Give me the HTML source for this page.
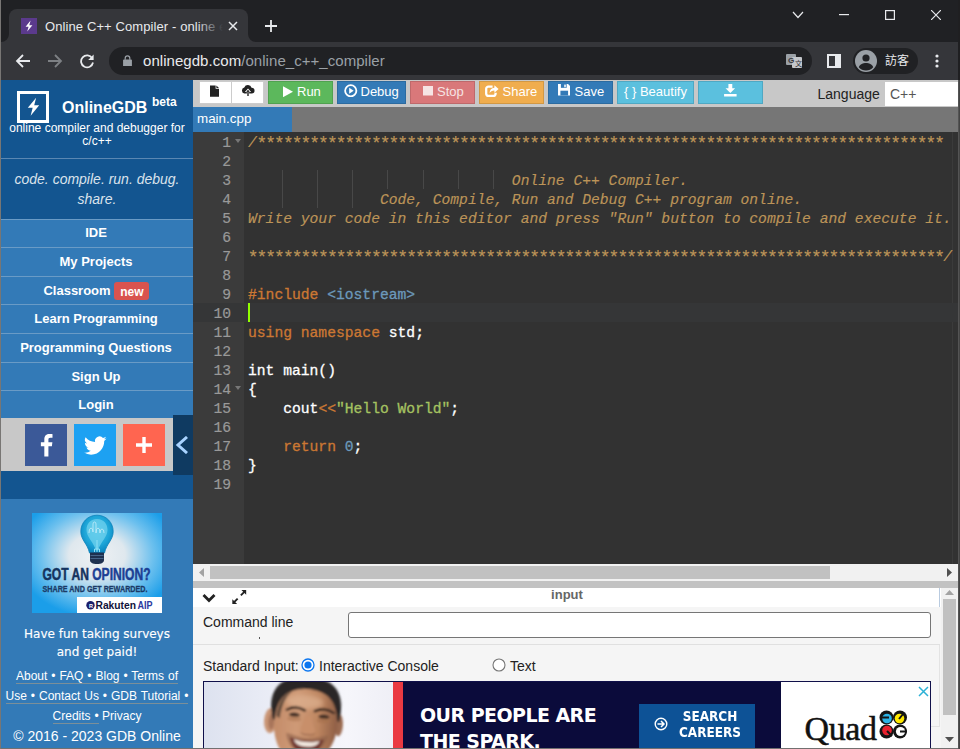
<!DOCTYPE html>
<html lang="en">
<head>
<meta charset="utf-8">
<title>Online C++ Compiler - online editor</title>
<style>
*{box-sizing:border-box;margin:0;padding:0}
html,body{width:960px;height:749px;overflow:hidden;background:#202124}
body{position:relative;font-family:"Liberation Sans",Arial,sans-serif;font-size:14px;color:#fff}
.abs{position:absolute}
/* ---------- browser chrome ---------- */
#tabstrip{position:absolute;left:0;top:0;width:960px;height:42px;background:#202124}
#tab{position:absolute;left:9px;top:9px;width:239px;height:33px;background:#35363a;border-radius:8px 8px 0 0}
#tabtitle{position:absolute;left:45px;top:17px;width:178px;height:20px;font-size:13px;line-height:20px;color:#e8eaed;white-space:nowrap;overflow:hidden;letter-spacing:0.1px}
#tabfade{position:absolute;left:196px;top:17px;width:27px;height:20px;background:linear-gradient(90deg,rgba(53,54,58,0),#35363a)}
#toolbar{position:absolute;left:0;top:42px;width:960px;height:38px;background:#35363a}
#omni{position:absolute;left:109px;top:47px;width:703px;height:28px;border-radius:14px;background:#202124}
#url{position:absolute;left:143px;top:51px;font-size:15px;line-height:20px;color:#e8eaed;white-space:nowrap;letter-spacing:0.05px}
#url span{color:#9aa0a6}
#chip{position:absolute;left:853px;top:48px;width:65px;height:26px;border-radius:13px;background:#202124}
#guest{position:absolute;left:885px;top:51px;font-size:12px;line-height:20px;color:#e8eaed;font-family:"Liberation Sans","Noto Sans CJK TC",sans-serif;white-space:nowrap}
/* ---------- sidebar ---------- */
#side{position:absolute;left:1px;top:80px;width:192px;height:669px;background:#135590;overflow:hidden}
#side .c{position:absolute;left:0;width:192px;text-align:center;white-space:nowrap}
.mi{position:absolute;left:0;width:192px;height:29px;background:#337ab7;border-top:1px solid #6a9bc6;text-align:center;font-weight:bold;font-size:13px;line-height:27px;color:#fff;padding-right:2px}
#foot a{color:#fff;text-decoration:none;border-bottom:1px solid #7b8f99;word-spacing:.600px;padding-bottom:0}
/* ---------- top toolbar ---------- */
#ptool{position:absolute;left:193px;top:80px;width:765px;height:27px;background:#c8c8c8}
.btn{position:absolute;top:81px;height:23px;font-size:13.400px;line-height:21px;color:#fff;text-align:center;white-space:nowrap;border:1px solid rgba(0,0,0,.12)}
.bt{position:absolute;top:84px;font-size:13px;line-height:16px;color:#fff;white-space:nowrap}
#ftabs{position:absolute;left:193px;top:107px;width:765px;height:25px;background:#767676}
#ftab{position:absolute;left:193px;top:107px;width:99px;height:25px;background:#337ab7;font-size:13.400px;line-height:24px;padding-left:4px;color:#fff}
/* ---------- editor ---------- */
#ed{position:absolute;left:193px;top:132px;width:765px;height:432px;background:#323232;overflow:hidden}
#gut{position:absolute;left:0;top:0;width:51px;height:432px;background:#3b3b3b}
.ln,.cl{margin-top:2px;position:absolute;font-family:"Liberation Mono","DejaVu Sans Mono",monospace;font-size:14.67px;line-height:19px;height:19px;white-space:pre}
.ln{left:0;width:38px;text-align:right;color:#999;-webkit-text-stroke:.200px currentColor}
.cl{left:55px;color:#fff;-webkit-text-stroke:.300px currentColor}
.cm{color:#bc9458;font-style:italic;-webkit-text-stroke:.150px currentColor}
.as{position:relative;top:2px;left:-.300px;font-size:18px;letter-spacing:-2px;line-height:10px;font-style:normal}
.kw{color:#cc7833}
.st{color:#a5c261}
.nu{color:#6c99bb}
/* ---------- bottom ---------- */
#hs{position:absolute;left:193px;top:564px;width:765px;height:17px;background:#f1f1f1}
#split{position:absolute;left:193px;top:581px;width:765px;height:7px;background:#c2c2c2}
#bot{position:absolute;left:193px;top:588px;width:748px;height:161px;background:#f5f5f5;color:#222}
#vs{position:absolute;left:941px;top:588px;width:17px;height:161px;background:#f1f1f1}
</style>
</head>
<body>
<!-- ======== Browser chrome ======== -->
<div id="tabstrip"></div>
<div id="tab"></div>
<svg class="abs" style="left:1px;top:34px" width="8" height="8"><path d="M8 0 V8 H0 A8 8 0 0 0 8 0Z" fill="#35363a"/></svg>
<svg class="abs" style="left:248px;top:34px" width="8" height="8"><path d="M0 0 V8 H8 A8 8 0 0 1 0 0Z" fill="#35363a"/></svg>
<svg class="abs" style="left:21px;top:18px" width="16" height="16" viewBox="0 0 16 16"><rect width="16" height="16" fill="#5b3a8c"/><path d="M9.6 2.6 L4.6 8.7 H7.6 L6.2 13.4 L11.4 7.2 H8.3 Z" fill="#fff"/></svg>
<div id="tabtitle">Online C++ Compiler - online editor</div>
<div id="tabfade"></div>
<svg class="abs" style="left:228px;top:21px" width="10" height="10" viewBox="0 0 10 10"><path d="M1 1 L9 9 M9 1 L1 9" stroke="#e8eaed" stroke-width="1.5" fill="none"/></svg>
<svg class="abs" style="left:265px;top:20px" width="12" height="12" viewBox="0 0 12 12"><path d="M6 0 V12 M0 6 H12" stroke="#e8eaed" stroke-width="1.8" fill="none"/></svg>
<!-- window controls -->
<svg class="abs" style="left:792px;top:10px" width="12" height="10" viewBox="0 0 12 10"><path d="M1 2 L6 7.5 L11 2" stroke="#e8eaed" stroke-width="1.2" fill="none"/></svg>
<svg class="abs" style="left:839px;top:14px" width="10" height="2"><rect width="10" height="1.2" fill="#e8eaed"/></svg>
<svg class="abs" style="left:885px;top:10px" width="10" height="10"><rect x=".6" y=".6" width="8.8" height="8.8" stroke="#e8eaed" stroke-width="1.2" fill="none"/></svg>
<svg class="abs" style="left:931px;top:10px" width="10" height="10"><path d="M0 0 L10 10 M10 0 L0 10" stroke="#e8eaed" stroke-width="1.2" fill="none"/></svg>

<div id="toolbar"></div>
<!-- back / forward / reload -->
<svg class="abs" style="left:15px;top:53px" width="16" height="16" viewBox="0 0 16 16"><path d="M15 8 H2.5 M8 2 L2 8 L8 14" stroke="#e8eaed" stroke-width="1.8" fill="none"/></svg>
<svg class="abs" style="left:47px;top:53px" width="16" height="16" viewBox="0 0 16 16"><path d="M1 8 H13.5 M8 2 L14 8 L8 14" stroke="#7d8084" stroke-width="1.8" fill="none"/></svg>
<svg class="abs" style="left:79px;top:53px" width="16" height="16" viewBox="0 0 16 16"><path d="M13.2 5.2 A6 6 0 1 0 14 9.5" stroke="#e8eaed" stroke-width="1.8" fill="none"/><path d="M14.6 1.6 V7 H9.2 Z" fill="#e8eaed"/></svg>
<div id="omni"></div>
<svg class="abs" style="left:122.500px;top:54.500px" width="9" height="11.500" viewBox="0 0 10 13"><rect x="0" y="5" width="10" height="8" rx="1" fill="#9aa0a6"/><path d="M2.4 5.5 V3.6 A2.6 2.6 0 0 1 7.6 3.6 V5.5" stroke="#9aa0a6" stroke-width="1.4" fill="none"/></svg>
<div id="url">onlinegdb.com<span>/online_c++_compiler</span></div>
<!-- translate icon -->
<svg class="abs" style="left:786px;top:53px" width="17" height="16" viewBox="0 0 17 16"><rect x="0" y="1" width="10" height="11" rx="1" fill="#9aa0a6"/><rect x="6" y="4" width="10" height="11" rx="1" fill="#c4c7cb"/><text x="2" y="10" font-size="8" font-weight="bold" fill="#35363a" font-family="Liberation Sans, sans-serif">G</text><text x="9" y="13" font-size="7" fill="#35363a" font-family="Liberation Sans, Noto Sans CJK TC, sans-serif">文</text></svg>
<!-- side panel icon -->
<svg class="abs" style="left:827px;top:54px" width="14" height="14" viewBox="0 0 14 14"><rect x="1" y="1" width="12" height="12" stroke="#e8eaed" stroke-width="2" fill="none"/><rect x="8" y="1" width="5" height="12" fill="#e8eaed"/></svg>
<div id="chip"></div>
<svg class="abs" style="left:855px;top:50px" width="22" height="22" viewBox="0 0 22 22"><circle cx="11" cy="11" r="11" fill="#9aa0a6"/><circle cx="11" cy="8" r="3.6" fill="#202124"/><path d="M3.8 17.2 C5 14 8 13 11 13 S17 14 18.2 17.2 A9.5 9.5 0 0 1 3.8 17.2Z" fill="#202124"/></svg>
<div id="guest">訪客</div>
<svg class="abs" style="left:935px;top:54px" width="4" height="14" viewBox="0 0 4 14"><circle cx="2" cy="2" r="1.6" fill="#e8eaed"/><circle cx="2" cy="7" r="1.6" fill="#e8eaed"/><circle cx="2" cy="12" r="1.6" fill="#e8eaed"/></svg>

<!-- ======== Sidebar ======== -->
<div id="side">
  <div class="abs" style="left:16px;top:11px;width:32px;height:32px;border:3px solid #fff"></div>
  <svg class="abs" style="left:22.500px;top:16px" width="19" height="21.500" viewBox="0 0 16 18"><path d="M10.2 1.5 L3.2 9.8 H7.3 L5.6 16.5 L12.8 7.8 H8.6 Z" fill="#fff"/></svg>
  <div class="abs" style="left:61px;top:18px;font-weight:bold;font-size:16px;line-height:20px;white-space:nowrap">OnlineGDB</div>
  <div class="abs" style="left:151px;top:14px;font-weight:bold;font-size:12px;line-height:16px">beta</div>
  <div class="c" style="top:42px;font-size:12px;line-height:13px">online compiler and debugger for<br>c/c++</div>
  <div class="abs" style="left:0;top:78px;width:192px;height:1px;background:#5a87b2"></div>
  <div class="c" style="top:89px;font-size:14px;line-height:20px;font-style:italic;color:#dbe3ec">code. compile. run. debug.<br>share.</div>
  <div class="mi" style="top:139px;line-height:25px">IDE</div>
  <div class="mi" style="top:167px">My Projects</div>
  <div class="mi" style="top:196px">Classroom <span style="display:inline-block;background:#d9534f;border-radius:3px;font-size:12px;line-height:12px;padding:3.500px 5px 2.500px 6px;vertical-align:-.500px;margin-left:0">new</span></div>
  <div class="mi" style="top:224px">Learn Programming</div>
  <div class="mi" style="top:253px">Programming Questions</div>
  <div class="mi" style="top:282px">Sign Up</div>
  <div class="mi" style="top:310px">Login</div>
  <!-- social -->
  <div class="abs" style="left:0;top:338px;width:172px;height:53px;background:#c8c8c8"></div>
  <div class="abs" style="left:24px;top:344px;width:42px;height:42px;background:#3b5998"></div>
  <div class="abs" style="left:73px;top:344px;width:42px;height:42px;background:#1da1f2"></div>
  <div class="abs" style="left:122px;top:344px;width:42px;height:42px;background:#ff6550"></div>
  <svg class="abs" style="left:21.500px;top:343px" width="46" height="44" viewBox="0 0 42 42"><path d="M23.3 32 V22.2 H26.6 L27.1 18.4 H23.3 V16 C23.3 14.9 23.6 14.1 25.2 14.1 H27.2 V10.7 C26.9 10.7 25.7 10.6 24.3 10.6 C21.4 10.6 19.4 12.3 19.4 15.6 V18.4 H16.1 V22.2 H19.4 V32 Z" fill="#fff"/></svg>
  <svg class="abs" style="left:73px;top:344px" width="42" height="42" viewBox="0 0 42 42"><path d="M32.5 14.6 c-.8.4-1.7.6-2.6.7 .9-.6 1.700-1.500 2-2.500 -.9.500-1.900.900-2.900 1.100 a4.600 4.600 0 0 0-7.900 4.200 c-3.800-.2-7.200-2-9.500-4.800 a4.600 4.600 0 0 0 1.400 6.100 c-.8 0-1.500-.2-2.100-.6 v.1 c0 2.200 1.600 4.100 3.700 4.500 -.7.200-1.400.2-2.100.1 .6 1.800 2.300 3.200 4.300 3.200 a9.300 9.300 0 0 1-6.800 1.900 a13 13 0 0 0 7.100 2.100 c8.500 0 13.100-7 13.100-13.100 v-.6 c.9-.6 1.700-1.500 2.300-2.400 z" fill="#fff"/></svg>
  <svg class="abs" style="left:122px;top:344px" width="42" height="42" viewBox="0 0 42 42"><path d="M21 13 V29 M13 21 H29" stroke="#fff" stroke-width="3.4" fill="none"/></svg>
  <div class="abs" style="left:172px;top:335px;width:20px;height:60px;background:#0f3a61"></div>
  <svg class="abs" style="left:174px;top:356px" width="14" height="18" viewBox="0 0 14 18"><path d="M12 1 L3 9 L12 17" stroke="#a9d3ff" stroke-width="3" fill="none"/></svg>
  <!-- lower section -->
  <div class="abs" style="left:0;top:419px;width:192px;height:250px;background:#337ab7"></div>
  <svg class="abs" style="left:31px;top:433px" width="130" height="100" viewBox="0 0 130 100">
    <defs><radialGradient id="adg" cx="50%" cy="42%" r="62%"><stop offset="0" stop-color="#eef1f3"/><stop offset=".35" stop-color="#dfe8ee"/><stop offset=".7" stop-color="#6cc0ee"/><stop offset="1" stop-color="#1b9ee9"/></radialGradient>
    <radialGradient id="blb" cx="50%" cy="42%" r="58%"><stop offset="0" stop-color="#46c0e6"/><stop offset=".65" stop-color="#1ea6d8"/><stop offset="1" stop-color="#0b86c0"/></radialGradient></defs>
    <rect width="130" height="100" fill="url(#adg)"/>
    <path d="M65 2.200 C55.500 2.200 48.800 9.700 48.800 18.500 C48.800 27 55.500 30.500 57.500 40 H72.500 C74.500 30.500 81.200 27 81.200 18.500 C81.200 9.700 74.500 2.200 65 2.200Z" fill="url(#blb)" stroke="#0c83bb" stroke-width=".800"/>
    <path d="M65 6 C58 6 54.500 11 54.500 17 C54.500 24 61.500 29 64 37.500 H66 C68.500 29 75.500 24 75.500 17 C75.500 11 72 6 65 6Z" fill="#6fd2ee" opacity=".75"/>
    <path d="M58 39.500 H72 V47 C72 49.500 69.500 51 65 51 C60.500 51 58 49.500 58 47Z" fill="#1e3150"/>
    <path d="M58.500 42.500 H71.500 M58.500 45.500 H71.500" stroke="#4a6a90" stroke-width=".900" fill="none"/>
    <path d="M65 39 V27 M62.500 39 V36 H67.500 V39" stroke="#8fe0f5" stroke-width="1" fill="none"/>
    <path d="M57 20 q0 -5 2 -5 q2 0 2 4 v-8 q0 -2 1.500 -2 q1.500 0 1.500 2 v9 q0 -5 2 -5 q2 0 2 5 q0 -4 2 -4 q2 0 2 4" stroke="#c5eefa" stroke-width=".800" fill="none"/>
    <text x="10.500" y="66.500" font-family="Liberation Sans, sans-serif" font-weight="bold" font-size="16" textLength="108" lengthAdjust="spacingAndGlyphs" fill="#14335f" stroke="#14335f" stroke-width=".500">GOT AN <tspan fill="#1c3f94" stroke="#1c3f94">OPINION?</tspan></text>
    <text x="10.500" y="79" font-family="Liberation Sans, sans-serif" font-weight="bold" font-size="9.500" textLength="105" lengthAdjust="spacingAndGlyphs" fill="#1b3a66" stroke="#1b3a66" stroke-width=".300">SHARE AND GET REWARDED.</text>
    <rect x="45" y="84" width="85" height="16" fill="#fff"/>
    <circle cx="58.500" cy="92.300" r="4.200" fill="#1b1f6b"/>
    <text x="57" y="94.500" font-family="Liberation Sans, sans-serif" font-weight="bold" font-size="5.500" fill="#fff">R</text>
    <text x="63.500" y="96" font-family="Liberation Sans, sans-serif" font-weight="bold" font-size="10.500" textLength="40.500" lengthAdjust="spacingAndGlyphs" fill="#10123a">Rakuten</text>
    <text x="105.500" y="96" font-family="Liberation Sans, sans-serif" font-weight="bold" font-size="10.500" textLength="15" lengthAdjust="spacingAndGlyphs" fill="#2b3aa0">AIP</text>
  </svg>
  <div class="c" style="top:545px;font-family:'DejaVu Sans','Liberation Sans',sans-serif;font-size:12px;line-height:18px;-webkit-text-stroke:.150px #fff">Have fun taking surveys<br>and get paid!</div>
  <div id="foot" class="c" style="top:586px;font-size:12px;line-height:20px;white-space:normal;left:-4px;width:200px">
    <a>About • FAQ • Blog • Terms of<br>Use • Contact Us • GDB Tutorial •<br>Credits •</a> Privacy<br><span style="font-size:14px">© 2016 - 2023 GDB Online</span>
  </div>
</div>

<!-- ======== Page toolbar ======== -->
<div id="ptool"></div>
<div class="btn" style="left:199px;width:33px;background:#fff;border-color:#ccc"></div>
<div class="btn" style="left:231px;width:33px;background:#fff;border-color:#ccc"></div>
<svg class="abs" style="left:210px;top:85px" width="9" height="12" viewBox="0 0 12 15"><path d="M0 0 H7.500 V4.500 H12 V15 H0 Z M8.500 0 L12 3.500 H8.500 Z" fill="#222"/></svg>
<svg class="abs" style="left:241px;top:85px" width="14" height="12.500" viewBox="0 0 18 16"><path d="M4.500 11 A4 4 0 0 1 4.200 3.200 A5 5 0 0 1 13.600 3.600 A3.700 3.700 0 0 1 13.800 11 Z" fill="#222"/><path d="M9 4.500 L13 9 H10.500 V14.500 H7.500 V9 H5 Z" fill="#fff"/><path d="M9 6.200 L11.300 8.800 H9.900 V14 H8.100 V8.800 H6.700 Z" fill="#222"/></svg>
<div class="btn" style="left:268px;width:65px;background:#5cb85c"></div>
<div class="btn" style="left:337px;width:69px;background:#337ab7"></div>
<div class="btn" style="left:410px;width:65px;background:#d9787a"></div>
<div class="btn" style="left:479px;width:65px;background:#f0ad4e"></div>
<div class="btn" style="left:548px;width:65px;background:#337ab7"></div>
<div class="btn" style="left:617px;width:77px;background:#5bc0de"></div>
<div class="btn" style="left:698px;width:65px;background:#5bc0de"></div>
<svg class="abs" style="left:282.500px;top:85.500px" width="10" height="11.500" viewBox="0 0 11 12"><path d="M0 0 L11 6 L0 12 Z" fill="#fff"/></svg>
<div class="bt" style="left:297px">Run</div>
<svg class="abs" style="left:344px;top:83.700px" width="13.500" height="13.500" viewBox="0 0 12 12"><circle cx="6" cy="6" r="5" stroke="#fff" stroke-width="1.600" fill="none"/><path d="M4.600 3.400 L8.600 6 L4.600 8.600 Z" fill="#fff"/></svg>
<div class="bt" style="left:360.500px">Debug</div>
<svg class="abs" style="left:423px;top:86px" width="10" height="9.500" viewBox="0 0 10 10" preserveAspectRatio="none"><rect width="10" height="10" fill="#f6e4e4"/></svg>
<div class="bt" style="left:437px;color:#f6e4e4">Stop</div>
<svg class="abs" style="left:485.400px;top:84.800px" width="13.600" height="12.200" viewBox="0 0 13.600 12.200"><path d="M7.600 1.600 H3.400 A2.200 2.200 0 0 0 1.200 3.800 V8.800 A2.200 2.200 0 0 0 3.400 11 H8.400 A2.200 2.200 0 0 0 10.600 8.800 V7.800" stroke="#fff" stroke-width="2.300" fill="none"/><path d="M9.400 0.200 L13.600 4 L9.400 7.800 V5.500 C7 5.500 5.600 6.300 4.600 8.200 C4.600 5 6.400 2.900 9.400 2.700 Z" fill="#fff"/></svg>
<div class="bt" style="left:502.500px">Share</div>
<svg class="abs" style="left:557.500px;top:84px" width="12.500" height="11.500" viewBox="0 0 13 12"><path d="M0 0 H10.500 L13 2.500 V12 H0 Z" fill="#fff"/><rect x="3" y="0" width="6" height="4" fill="#337ab7"/><rect x="6.500" y=".6" width="1.600" height="2.800" fill="#fff"/><rect x="2.500" y="7" width="8" height="5" fill="#337ab7"/></svg>
<div class="bt" style="left:574.500px">Save</div>
<div class="bt" style="left:624px">{ } Beautify</div>
<svg class="abs" style="left:724px;top:84px" width="12.700" height="12.500" viewBox="0 0 13 13"><path d="M4.500 0 H8.500 V4.500 H11.500 L6.500 9.300 L1.500 4.500 H4.500 Z M0 10.500 H13 V13 H0 Z" fill="#fff"/></svg>
<div class="abs" style="left:817.500px;top:84px;font-size:14px;line-height:20px;color:#222">Language</div>
<div class="abs" style="left:885px;top:82px;width:73px;height:24px;background:#fff;color:#555;font-size:14px;line-height:24px;padding-left:5px">C++</div>
<div id="ftabs"></div>
<div id="ftab">main.cpp</div>

<!-- ======== Editor ======== -->
<div id="ed">
  <div id="gut"></div>
  <div class="abs" style="left:759px;top:0;width:1px;height:432px;background:#3b3b3b"></div>
  <div class="abs" style="left:0;top:171px;width:765px;height:19px;background:#353637"></div>
  <div class="abs" style="left:55px;top:171px;width:2px;height:19px;background:#91ff00"></div>
  <div class="abs" style="left:89px;top:38px;width:1px;height:38px;background:#484848"></div>
  <div class="abs" style="left:124px;top:38px;width:1px;height:38px;background:#484848"></div>
  <div class="abs" style="left:159px;top:38px;width:1px;height:38px;background:#484848"></div>
  <div class="abs" style="left:194px;top:38px;width:1px;height:19px;background:#484848"></div>
  <div class="abs" style="left:230px;top:38px;width:1px;height:19px;background:#484848"></div>
  <div class="abs" style="left:265px;top:38px;width:1px;height:19px;background:#484848"></div>
  <div class="abs" style="left:300px;top:38px;width:1px;height:19px;background:#484848"></div>
  <div class="ln" style="top:0">1</div><div class="ln" style="top:19px">2</div><div class="ln" style="top:38px">3</div><div class="ln" style="top:57px">4</div><div class="ln" style="top:76px">5</div><div class="ln" style="top:95px">6</div><div class="ln" style="top:114px">7</div><div class="ln" style="top:133px">8</div><div class="ln" style="top:152px">9</div><div class="ln" style="top:171px">10</div><div class="ln" style="top:190px">11</div><div class="ln" style="top:209px">12</div><div class="ln" style="top:228px">13</div><div class="ln" style="top:247px">14</div><div class="ln" style="top:266px">15</div><div class="ln" style="top:285px">16</div><div class="ln" style="top:304px">17</div><div class="ln" style="top:323px">18</div><div class="ln" style="top:342px">19</div>
  <svg class="abs" style="left:42px;top:7px" width="6" height="4"><path d="M0 0 H6 L3 4 Z" fill="#777"/></svg>
  <svg class="abs" style="left:42px;top:254px" width="6" height="4"><path d="M0 0 H6 L3 4 Z" fill="#777"/></svg>
  <div class="cl cm" style="top:0">/<span class="as">******************************************************************************</span></div>
  <div class="cl cm" style="top:38px">                              Online C++ Compiler.</div>
  <div class="cl cm" style="top:57px">               Code, Compile, Run and Debug C++ program online.</div>
  <div class="cl cm" style="top:76px">Write your code in this editor and press "Run" button to compile and execute it.</div>
  <div class="cl cm" style="top:114px"><span class="as">*******************************************************************************</span>/</div>
  <div class="cl" style="top:152px"><span class="kw">#include</span> <span class="nu">&lt;iostream&gt;</span></div>
  <div class="cl" style="top:190px"><span class="kw">using</span> <span class="kw">namespace</span> std;</div>
  <div class="cl" style="top:228px">int main()</div>
  <div class="cl" style="top:247px">{</div>
  <div class="cl" style="top:266px">    cout<span class="kw">&lt;&lt;</span><span class="st">"Hello World"</span>;</div>
  <div class="cl" style="top:304px">    <span class="kw">return</span> <span class="nu">0</span>;</div>
  <div class="cl" style="top:323px">}</div>
</div>

<!-- ======== Bottom panel ======== -->
<div id="hs"></div>
<div class="abs" style="left:210px;top:566px;width:620px;height:13px;background:#c1c1c1"></div>
<svg class="abs" style="left:199px;top:568px" width="5" height="9"><path d="M5 0 V9 L0 4.500 Z" fill="#a3a3a3"/></svg>
<svg class="abs" style="left:947px;top:568px" width="5" height="9"><path d="M0 0 V9 L5 4.500 Z" fill="#505050"/></svg>
<div id="split"></div>
<div id="bot">
  <div class="abs" style="left:0;top:0;width:748px;height:19px;background:#fff"></div>
  <div class="abs" style="left:746px;top:0;width:1px;height:19px;background:#b9cbe0"></div>
  <svg class="abs" style="left:9px;top:5px" width="14" height="10" viewBox="0 0 14 10"><path d="M1.500 2 L7 7.500 L12.500 2" stroke="#222" stroke-width="2.800" fill="none"/></svg>
  <svg class="abs" style="left:38px;top:1px" width="16.500" height="16" viewBox="0 0 15 15"><path d="M9.500 1 H14 V5.500 Z M1 9.500 V14 H5.500 Z" fill="#222"/><path d="M12.500 2.500 L9 6 M2.500 12.500 L6 9" stroke="#222" stroke-width="1.800" fill="none"/></svg>
  <div class="abs" style="left:0;top:-1px;width:748px;text-align:center;font-size:13px;font-weight:bold;line-height:16px;color:#666">input</div>
  <div class="abs" style="left:10px;top:24px;font-size:14px;line-height:20px;color:#222;white-space:nowrap">Command line</div>
  <div class="abs" style="left:66px;top:49px;width:1px;height:2px;background:#555"></div>
  <div class="abs" style="left:155px;top:24px;width:583px;height:26px;background:#fff;border:1px solid #767676;border-radius:3px"></div>
  <div class="abs" style="left:0;top:56px;width:747px;height:1px;background:#e0e0e0"></div>
  <div class="abs" style="left:746px;top:57px;width:1px;height:82px;background:#e3e3e3"></div>
  <div class="abs" style="left:738px;top:138px;width:9px;height:1px;background:#e3e3e3"></div>
  <div class="abs" style="left:10px;top:68px;font-size:14px;line-height:20px;color:#222;white-space:nowrap">Standard Input:</div>
  <svg class="abs" style="left:108px;top:70px" width="14" height="14" viewBox="0 0 14 14"><circle cx="7" cy="7" r="6" fill="#fff" stroke="#0b76ef" stroke-width="1.300"/><circle cx="7" cy="7" r="3.600" fill="#0b76ef"/></svg>
  <div class="abs" style="left:126px;top:68px;font-size:14px;line-height:20px;color:#222;white-space:nowrap">Interactive Console</div>
  <svg class="abs" style="left:299px;top:70px" width="14" height="14" viewBox="0 0 14 14"><circle cx="7" cy="7" r="6" fill="#fff" stroke="#767676" stroke-width="1.100"/></svg>
  <div class="abs" style="left:317px;top:68px;font-size:14px;line-height:20px;color:#222;white-space:nowrap">Text</div>
  <!-- banner ad -->
  <div class="abs" style="left:10px;top:93px;width:728px;height:70px;background:#fff;border:1px solid #10104a;overflow:hidden">
    <svg class="abs" style="left:0;top:0" width="190" height="68" viewBox="0 0 190 68">
      <defs><linearGradient id="pbg" x1="0" x2="1"><stop offset="0" stop-color="#dde2ef"/><stop offset=".4" stop-color="#eceef7"/><stop offset=".75" stop-color="#f6f6fb"/><stop offset="1" stop-color="#efeff6"/></linearGradient>
      <linearGradient id="skin" x1="0" x2="1"><stop offset="0" stop-color="#c48c69"/><stop offset=".35" stop-color="#cf9a77"/><stop offset=".7" stop-color="#bd8560"/><stop offset="1" stop-color="#8e5e45"/></linearGradient>
      <filter id="bl" x="-20%" y="-20%" width="140%" height="140%"><feGaussianBlur stdDeviation=".800"/></filter>
      <filter id="bl2" x="-30%" y="-30%" width="160%" height="160%"><feGaussianBlur stdDeviation="2.200"/></filter></defs>
      <rect width="190" height="68" fill="url(#pbg)"/>
      <g filter="url(#bl)" transform="rotate(4 101 40)">
        <ellipse cx="66.500" cy="41" rx="6.500" ry="12.500" fill="#c99475"/>
        <ellipse cx="67.500" cy="42" rx="3" ry="8" fill="#a8755a"/>
        <ellipse cx="135" cy="41" rx="4" ry="11" fill="#9a694f"/>
        <path d="M69 40 C60 12 72 -6 102 -5 C129 -6 140 10 135 38 L132 36 C131 22 124 13 101 12 C84 12 76 20 73 38 Z" fill="#2c2826"/>
        <path d="M71 36 C72 16 84 7 101 7 C120 7 131 16 133 36 C135 52 129 66 119 76 H83 C73 64 69 52 71 36Z" fill="url(#skin)"/>
        <ellipse cx="99" cy="20" rx="19" ry="7" fill="#ddb08f" opacity=".75" filter="url(#bl2)"/>
        <path d="M72 36 C73 22 78 14 86 10.500 C79 17 76.500 26 75.500 38 Z" fill="#3a302b" opacity=".7"/>
                <path d="M82 29 C87 25.500 94 25.500 100 28.500 M110 28.500 C116 25.500 123 25.500 129 29" stroke="#3a2a23" stroke-width="2.600" fill="none" stroke-linecap="round"/>
        <ellipse cx="90" cy="33.500" rx="5.500" ry="2.200" fill="#3b2a24"/><ellipse cx="119.500" cy="33.500" rx="5.500" ry="2.200" fill="#3b2a24"/>
        <ellipse cx="90" cy="37.500" rx="7" ry="2.500" fill="#b07a59" opacity=".7"/><ellipse cx="119.500" cy="37.500" rx="7" ry="2.500" fill="#a8724f" opacity=".7"/>
        <path d="M101 34 C99 42 96 47 97.500 50 C101 53 108 53 111.500 50 C112.500 47 108 42 107 34 Z" fill="#c88f6b"/>
        <path d="M97 50.500 C101 53 108 53 112 50.500 C110 54 99 54 97 50.500Z" fill="#7a4c38"/>
        <path d="M83 52 C90 53 97 56 104 56 C111 56 118 53 125 52 C124 63 115 72 104 72 C93 72 84 63 83 52Z" fill="#8a5e49" opacity=".55"/>
        <path d="M87 56 C97 59.500 111 59.500 121 56 C119 66 112 71 104 71 C96 71 89 66 87 56Z" fill="#70352d"/>
        <path d="M91 58 C99 60.500 109 60.500 117 58 C115 63 110 64.500 104 64.500 C98 64.500 93 63 91 58Z" fill="#f1e8df"/>
      </g>
    </svg>
    <div class="abs" style="left:189px;top:0;width:10px;height:68px;background:#ea3a42"></div>
    <div class="abs" style="left:199px;top:0;width:378px;height:68px;background:#0b0b3b"></div>
    <div class="abs" style="left:216px;top:20px;font-family:'DejaVu Sans','Liberation Sans',sans-serif;font-weight:bold;font-size:19px;line-height:26px;color:#fff;white-space:nowrap;letter-spacing:-0.550px">OUR PEOPLE ARE<br>THE SPARK.</div>
    <div class="abs" style="left:435px;top:22px;width:116px;height:46px;background:#0d5296"></div>
    <svg class="abs" style="left:450px;top:35px" width="14" height="14" viewBox="0 0 14 14"><circle cx="7" cy="7" r="5.800" stroke="#fff" stroke-width="1.400" fill="none"/><path d="M3.500 7 H9.500 M7 4 L10 7 L7 10" stroke="#fff" stroke-width="1.500" fill="none"/></svg>
    <div class="abs" style="left:456px;top:26px;width:100px;text-align:center;font-family:'DejaVu Sans','Liberation Sans',sans-serif;font-weight:bold;font-size:14.400px;line-height:16.300px;color:#fff;transform:scaleX(.84)">SEARCH<br>CAREERS</div>
    <div class="abs" style="left:600.500px;top:27px;font-family:'Liberation Serif',serif;font-size:34px;line-height:40px;color:#111;letter-spacing:-.400px;-webkit-text-stroke:.500px #111">Quad</div>
    <svg class="abs" style="left:675px;top:28px" width="29" height="29" viewBox="0 0 29 29">
      <circle cx="7.500" cy="7.500" r="7" fill="#151515"/><circle cx="21" cy="7.500" r="7" fill="#151515"/><circle cx="7.500" cy="21.500" r="7" fill="#151515"/><circle cx="21" cy="21.500" r="7" fill="#151515"/>
      <circle cx="8" cy="8.500" r="4.800" fill="#2bb3e6"/><circle cx="20.500" cy="8.500" r="4.800" fill="#ffe900"/><circle cx="8" cy="20.500" r="4.800" fill="#e8212e"/><circle cx="21.500" cy="21.500" r="4.600" fill="#fff"/>
      <path d="M3 7.500 H10 M20 9 L24 4 M8 21 L13 26 M21 21.500 H28" stroke="#151515" stroke-width="2" fill="none"/>
    </svg>
    <svg class="abs" style="left:714px;top:4px" width="11" height="11" viewBox="0 0 11 11"><path d="M1 1 L10 10 M10 1 L1 10" stroke="#2cb1d6" stroke-width="1.500" fill="none"/></svg>
  </div>
</div>
<div id="vs"></div>
<div class="abs" style="left:943px;top:599px;width:13px;height:116px;background:#c1c1c1"></div>
<svg class="abs" style="left:945px;top:590px" width="9" height="5"><path d="M0 5 H9 L4.500 0 Z" fill="#a3a3a3"/></svg>
<svg class="abs" style="left:945px;top:737px" width="9" height="5"><path d="M0 0 H9 L4.500 5 Z" fill="#505050"/></svg>
<div class="abs" style="left:0;top:748px;width:960px;height:1px;background:#727070"></div>
<div class="abs" style="left:958px;top:0;width:2px;height:80px;background:#1f1f21"></div><div class="abs" style="left:958px;top:80px;width:2px;height:669px;background:linear-gradient(90deg,#5c5c5c,#3c3c3c)"></div>
<div class="abs" style="left:0;top:0;width:1px;height:749px;background:#787674"></div>
</body>
</html>
